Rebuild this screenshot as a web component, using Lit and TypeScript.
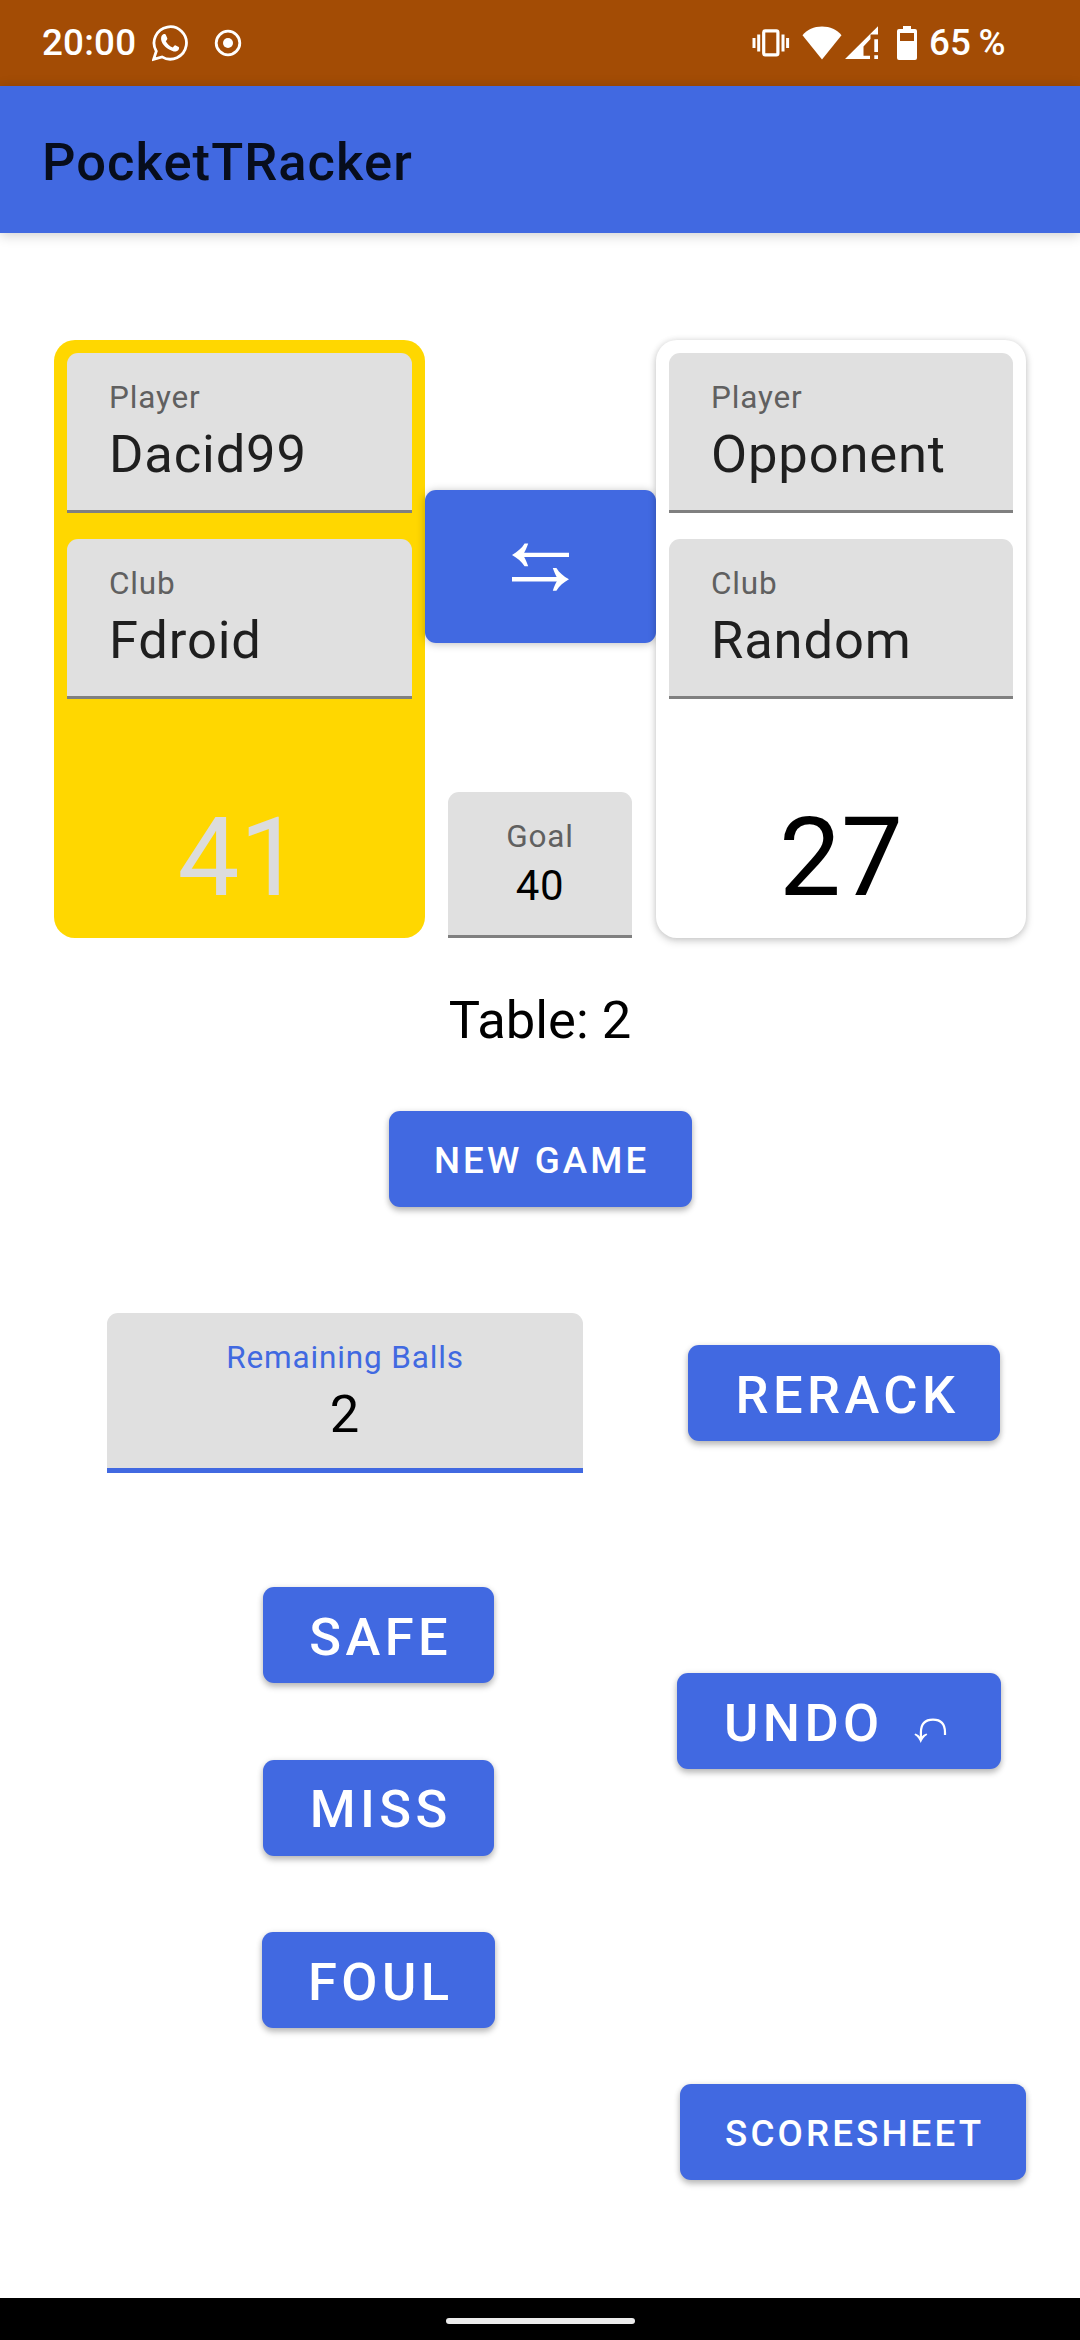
import { LitElement, html, css, svg } from "lit";
import { customElement, property } from "lit/decorators.js";
import { classMap } from "lit/directives/class-map.js";

@customElement("text-field")
class TextField extends LitElement {
  @property() label = "";
  @property() value = "";
  @property({ type: Boolean }) centered = false;
  @property({ type: Boolean }) focused = false;
  @property({ type: Boolean }) compact = false;

  static styles = css`
    :host { display: block; }
    .field {
      box-sizing: border-box;
      height: 160px;
      padding: 26px 42px 0;
      background: #e0e0e0;
      border-radius: 11px 11px 0 0;
      box-shadow: inset 0 -3px 0 #808080;
      color: #1f1f1f;
      white-space: nowrap;
    }
    .label {
      font-size: 31.5px;
      line-height: 38px;
      letter-spacing: 0.85px;
      color: #606060;
    }
    .value {
      margin-top: 6px;
      font-size: 52.5px;
      line-height: 62px;
      letter-spacing: 0.85px;
    }
    .centered { padding-left: 0; padding-right: 0; text-align: center; color: #000; }
    .focused { box-shadow: inset 0 -5px 0 #4169e1; }
    .focused .label { color: #4169e1; }
    .compact { height: 146px; }
    .compact .value { font-size: 42px; line-height: 50px; margin-top: 5px; letter-spacing: 0.7px; }
  `;

  render() {
    return html`
      <div class=${classMap({ field: true, centered: this.centered, focused: this.focused, compact: this.compact })}>
        <div class="label">${this.label}</div>
        <div class="value">${this.value}</div>
      </div>
    `;
  }
}

@customElement("player-card")
class PlayerCard extends LitElement {
  @property() player = "";
  @property() club = "";
  @property() score = "";
  @property({ type: Boolean }) active = false;

  static styles = css`
    :host { display: block; }
    .card {
      box-sizing: border-box;
      height: 598px;
      padding: 13px;
      border-radius: 21px;
      background: #fff;
      color: #000;
      display: flex;
      flex-direction: column;
      gap: 26px;
      box-shadow: 0 3px 8px rgba(0, 0, 0, 0.18), 0 0 6px rgba(0, 0, 0, 0.1);
    }
    .active { background: #ffd700; color: #dcdcdc; box-shadow: none; }
    .score {
      margin-top: 68px;
      text-align: center;
      font-size: 110.25px;
      line-height: 130px;
    }
  `;

  render() {
    return html`
      <div class=${classMap({ card: true, active: this.active })}>
        <text-field label="Player" value=${this.player}></text-field>
        <text-field label="Club" value=${this.club}></text-field>
        <div class="score">${this.score}</div>
      </div>
    `;
  }
}

const whatsappIcon = svg`
  <svg width="36" height="38" viewBox="0 0 36 38">
    <path d="M1.6 35.4 L4.3 27.2 A16.2 16.2 0 1 1 10 32.9 Z" fill="none" stroke="#fff" stroke-width="2.8" stroke-linejoin="miter"/>
    <path d="M9.3 12.8 C9.6 11.3 11 9.8 12.2 9.9 C13.3 9.9 13.5 10.1 13.9 11 L15.3 14.3 C15.6 15.2 14.6 16.2 13.8 17.2 C15.4 20.2 17.6 22.2 20.8 23.5 C21.8 22.5 22.4 21.2 23.3 21.3 L26.7 22.9 C27.3 23.3 27.2 24.4 26.7 25.4 C25.7 27 23.7 27.8 21.7 27.4 C15.5 26 9.6 20.3 9.1 15.6 C9 14.6 9.1 13.7 9.3 12.8 Z" fill="#fff"/>
  </svg>`;

const recordIcon = svg`
  <svg width="28" height="28" viewBox="0 0 28 28">
    <circle cx="14" cy="14" r="11.8" fill="none" stroke="#fff" stroke-width="2.8"/>
    <circle cx="14" cy="14" r="5" fill="#fff"/>
  </svg>`;

const vibrateIcon = svg`
  <svg width="38" height="28" viewBox="0 0 38 28">
    <rect x="11.7" y="1.9" width="14.2" height="24" rx="1.6" fill="none" stroke="#fff" stroke-width="3.2"/>
    <path d="M2 9V19M6.7 5.5V22.5M31 5.5V22.5M35.6 9V19" stroke="#fff" stroke-width="3" fill="none"/>
  </svg>`;

const wifiIcon = svg`
  <svg width="40" height="34" viewBox="0 0 40 34">
    <path d="M20 33.5 L0.5 9.2 C5 3.6 12 0.5 20 0.5 C28 0.5 35 3.6 39.5 9.2 Z" fill="#fff"/>
  </svg>`;

const signalIcon = svg`
  <svg width="34" height="34" viewBox="0 0 34 34">
    <path d="M0 33 L33 0.3 V8.6 H25.5 V13 L18.5 20.5 V29.7 H25 V33 Z" fill="#fff"/>
    <path d="M29.3 13.2H33V26H29.3ZM29.3 29.3H33V33H29.3Z" fill="#fff"/>
  </svg>`;

const batteryIcon = svg`
  <svg width="20" height="34" viewBox="0 0 20 34">
    <path fill-rule="evenodd" fill="#fff" d="M6 0H14V3H18A2 2 0 0 1 20 5V32A2 2 0 0 1 18 34H2A2 2 0 0 1 0 32V5A2 2 0 0 1 2 3H6ZM3 7V15H17V7Z"/>
  </svg>`;

const swapIcon = svg`
  <svg width="57" height="48" viewBox="0 0 57 48">
    <path d="M10 9.7H57V14.1H10ZM0 34.1H47V38.5H0Z" fill="#fff"/>
    <path d="M0 11.9C5.5 8.8 9.6 5.4 12.6 0.5H16.2C14.8 4.6 13 8.6 11 11.9C13 15.2 14.8 19 16.2 23.3H12.6C9.6 18.4 5.5 15 0 11.9Z" fill="#fff"/>
    <path d="M57 36.3C51.5 33.2 47.4 29.8 44.4 24.9H40.8C42.2 29 44 33 46 36.3C44 39.6 42.2 43.4 40.8 47.7H44.4C47.4 42.8 51.5 39.4 57 36.3Z" fill="#fff"/>
  </svg>`;

const undoIcon = svg`
  <svg class="undo-icon" width="33" height="26" viewBox="0 0 33 26">
    <path d="M6.9 22V14.5C6.9 5.5 11.5 1.7 19 1.7C26.5 1.7 31 5.7 31 14.5V17" fill="none" stroke="#fff" stroke-width="2.2"/>
    <path d="M0.4 16.7L1.4 15.5C3.5 16.3 5.2 17.5 6.9 20C8.3 17.5 10.2 16.3 12.4 15.5L13.3 16.7C10.2 18.6 8.2 21.2 6.7 25C5.5 21.2 3.5 18.6 0.4 16.7Z" fill="#fff"/>
  </svg>`;

@customElement("app-root")
class AppRoot extends LitElement {
  static styles = css`
    :host {
      display: flex;
      flex-direction: column;
      width: 1080px;
      height: 2340px;
      overflow: hidden;
      background: #fff;
      color: #000;
      font-family: Roboto, "Liberation Sans", sans-serif;
    }
    svg { display: block; flex: none; }
    .status {
      box-sizing: border-box;
      flex: none;
      height: 86px;
      padding: 0 75px 0 42px;
      display: flex;
      align-items: center;
      background: #a34c05;
      color: #fff;
      font-size: 36.75px;
      font-weight: 500;
    }
    .clock { width: 110px; line-height: 44px; letter-spacing: 0.2px; }
    .record { margin-left: 26px; }
    .grow { flex: 1; }
    .wifi { margin-left: 12px; }
    .signal { margin-left: 3px; }
    .battery { margin-left: 18px; }
    .percent { margin-left: 12px; width: 76px; line-height: 44px; white-space: nowrap; word-spacing: -1.5px; }
    .appbar {
      box-sizing: border-box;
      flex: none;
      height: 147px;
      padding: 4px 42px 0;
      display: flex;
      align-items: center;
      background: #4169e1;
      color: #070d1c;
      font-size: 52.5px;
      font-weight: 500;
      line-height: 62px;
      letter-spacing: 1.05px;
      box-shadow: 0 2px 12px rgba(0, 0, 0, 0.2);
    }
    .main {
      flex: 1;
      display: flex;
      flex-direction: column;
      align-items: center;
      padding: 107px 54px 0;
    }
    .board {
      align-self: stretch;
      display: grid;
      grid-template-columns: 371px 231px 370px;
    }
    .middle {
      display: flex;
      flex-direction: column;
      justify-content: space-between;
      padding-top: 150px;
    }
    .goal { margin: 0 24px 0 23px; }
    .button {
      box-sizing: border-box;
      height: 96px;
      padding: 3px 0 0 4.4px;
      border: 0;
      border-radius: 11px;
      display: flex;
      align-items: center;
      justify-content: center;
      background: #4169e1;
      color: #fff;
      font-family: inherit;
      font-size: 52.5px;
      font-weight: 500;
      letter-spacing: 4.4px;
      white-space: nowrap;
      box-shadow: 0 4px 6px rgba(0, 0, 0, 0.22), 0 1px 6px rgba(0, 0, 0, 0.12);
    }
    .small { font-size: 36.75px; letter-spacing: 3.1px; padding-left: 3.3px; }
    .swap { height: 153px; padding: 0; box-shadow: 0 1px 8px rgba(0, 0, 0, 0.25); }
    .table { margin-top: 50px; font-size: 52.5px; line-height: 64px; }
    .new-game { width: 303px; margin-top: 59px; }
    .controls {
      align-self: stretch;
      margin-top: 106px;
      display: flex;
      justify-content: space-between;
    }
    .left {
      width: 476px;
      margin-left: 53px;
      display: flex;
      flex-direction: column;
    }
    .actions {
      margin: 114px 88px 0 155px;
      display: flex;
      flex-direction: column;
      align-items: center;
      gap: 76.5px;
    }
    .safe, .miss { width: 231px; }
    .foul { width: 233px; }
    .right {
      display: flex;
      flex-direction: column;
      align-items: flex-end;
      padding-top: 32px;
    }
    .rerack { width: 312px; margin-right: 26px; padding-left: 7px; }
    .undo { width: 324px; margin: 232px 25px 0 0; justify-content: flex-start; padding-left: 47px; }
    .undo-icon { margin: 16px 0 0 30px; }
    .scoresheet { width: 346px; margin-top: 315px; }
    .nav {
      box-sizing: border-box;
      flex: none;
      height: 42px;
      padding-top: 4px;
      display: flex;
      align-items: center;
      justify-content: center;
      background: #000;
    }
    .handle { width: 189px; height: 6px; border-radius: 3px; background: #ebebeb; }
  `;

  render() {
    return html`
      <div class="status">
        <span class="clock">20:00</span>
        ${whatsappIcon}
        <span class="record">${recordIcon}</span>
        <span class="grow"></span>
        ${vibrateIcon}
        <span class="wifi">${wifiIcon}</span>
        <span class="signal">${signalIcon}</span>
        <span class="battery">${batteryIcon}</span>
        <span class="percent">65 %</span>
      </div>
      <div class="appbar">PocketTRacker</div>
      <div class="main">
        <div class="board">
          <player-card player="Dacid99" club="Fdroid" score="41" active></player-card>
          <div class="middle">
            <button class="button swap">${swapIcon}</button>
            <text-field class="goal" label="Goal" value="40" centered compact></text-field>
          </div>
          <player-card player="Opponent" club="Random" score="27"></player-card>
        </div>
        <div class="table">Table: 2</div>
        <button class="button small new-game">NEW GAME</button>
        <div class="controls">
          <div class="left">
            <text-field label="Remaining Balls" value="2" centered focused></text-field>
            <div class="actions">
              <button class="button safe">SAFE</button>
              <button class="button miss">MISS</button>
              <button class="button foul">FOUL</button>
            </div>
          </div>
          <div class="right">
            <button class="button rerack">RERACK</button>
            <button class="button undo"><span>UNDO</span>${undoIcon}</button>
            <button class="button small scoresheet">SCORESHEET</button>
          </div>
        </div>
      </div>
      <div class="nav"><div class="handle"></div></div>
    `;
  }
}
